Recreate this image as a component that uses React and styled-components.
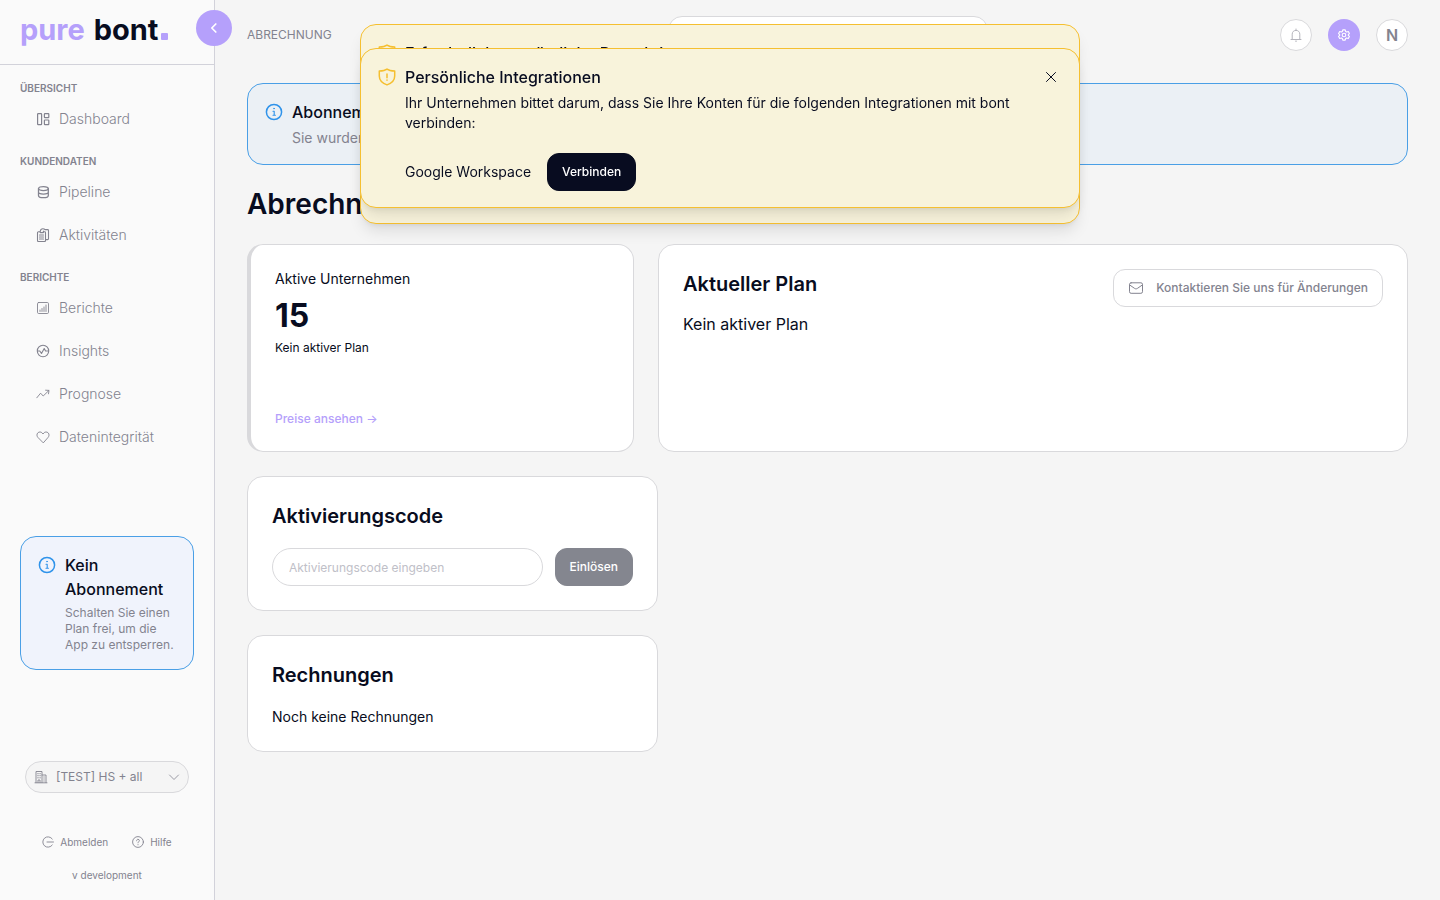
import React from "react";
import styled, { createGlobalStyle, css } from "styled-components";

const c = {
  ink: "#080c20",
  muted: "#83838f",
  line: "#d9d9dc",
  rule: "#d2d2da",
  page: "#f5f5f5",
  side: "#fafafa",
  violet: "#b5a0fb",
  blue: "#4a9fe6",
  info: "#2f93ea",
  amber: "#f5bf30",
  cream: "#f8f3db",
};

const Global = createGlobalStyle`
  *, *::before, *::after { box-sizing: border-box; }
  body {
    margin: 0;
    background: ${c.page};
    color: ${c.ink};
    font-family: Inter, "Liberation Sans", sans-serif;
    font-size: 14px;
    line-height: 20px;
  }
  h1, h2, h3, p, ul { margin: 0; padding: 0; }
  ul { list-style: none; }
  button, input, select { font-family: inherit; margin: 0; }
  button { cursor: pointer; }
  a { color: inherit; text-decoration: none; }
`;

const Page = styled.div`
  display: flex;
  min-height: 100vh;
`;

/* ---------- icons ---------- */

const Svg = styled.svg`
  flex: none;
  display: block;
  width: ${(p) => p.$size}px;
  height: ${(p) => p.$size}px;
  fill: none;
  stroke: currentColor;
  stroke-width: ${(p) => p.$stroke};
  stroke-linecap: round;
  stroke-linejoin: round;
`;

const Icon = ({ size = 14, stroke = 1, box = size, children }) => (
  <Svg $size={size} $stroke={stroke} viewBox={`0 0 ${box} ${box}`} aria-hidden="true">
    {children}
  </Svg>
);

const DashboardIcon = () => (
  <Icon stroke={1.2}>
    <rect x="1.6" y="1.6" width="4" height="11" rx=".6" />
    <rect x="8.4" y="1.6" width="4.4" height="4" rx=".6" />
    <rect x="8.4" y="8" width="4.4" height="4.6" rx=".6" />
  </Icon>
);
const DatabaseIcon = () => (
  <Icon stroke={1.3}>
    <ellipse cx="7.4" cy="3.6" rx="4.900" ry="2" />
    <path d="M2.500 3.600v6.800c0 1.300 2.200 2.200 4.900 2.200s4.900-.9 4.900-2.200V3.600M2.500 7c0 1.300 2.200 2.100 4.900 2.100s4.900-.8 4.900-2.100" />
  </Icon>
);
const ClipboardIcon = () => (
  <Icon stroke={1.1}>
    <path d="M4 3.800H2.400a.9.9 0 0 0-.9.9v7.900a.9.9 0 0 0 .9.9h6.200a.9.9 0 0 0 .9-.9V4.700a.9.9 0 0 0-.9-.9H7.400" />
    <path d="M4.200 3v1.600h3.200V3M4.400 3c.2-1.600 1.200-2.300 2.400-2.300S8.600 1 9 1.600h2.600a.9.9 0 0 1 .9.900v8.200a.9.9 0 0 1-.9.900H9.700M3.500 7h4M3.500 9h4M3.500 11h4" />
  </Icon>
);
const ReportIcon = () => (
  <Icon stroke={0.9}>
    <rect x="1.500" y="1.500" width="11" height="11" rx="1.200" />
    <path d="M4 10.500V9M6 10.500V7.500M8 10.500V6M10 10.500V4" />
  </Icon>
);
const InsightIcon = () => (
  <Icon stroke={1.100}>
    <circle cx="7" cy="7" r="5.700" />
    <path d="M1.500 7h2.300l1.700 2.500L8.200 4.600 9.600 7h2.900" />
  </Icon>
);
const TrendIcon = () => (
  <Icon stroke={0.9}>
    <path d="M.8 10.800 4.600 6.200l2.600 2.800 5.600-5.400M9.600 3.200l3.400.2-.5 3.400" />
  </Icon>
);
const HeartIcon = () => (
  <Icon stroke={0.9}>
    <path d="M7 12.600 1.900 7.400C.7 6.100.6 4.100 1.800 2.900c1.300-1.300 3.300-1.200 4.400.1L7 4l.8-1c1.100-1.300 3.100-1.400 4.400-.1 1.200 1.200 1.100 3.200-.1 4.500z" />
  </Icon>
);
const InfoIcon = () => (
  <Icon size={18} stroke={1.500}>
    <circle cx="9" cy="9" r="7.600" />
    <path d="M8 8.200h1.200v4M8 12.300h2.400" strokeWidth="1.100" />
    <circle cx="9" cy="5.600" r=".5" strokeWidth=".6" fill="currentColor" />
  </Icon>
);
const ShieldIcon = () => (
  <Icon size={18} stroke={1.500}>
    <path d="M9 1.100C7 2.600 4 3 1.300 3.100v5c0 4.300 3 7.200 7.700 8.800 4.700-1.600 7.700-4.500 7.700-8.800v-5C14 3 11 2.600 9 1.100z" />
    <path d="M9 6v3.800M9 12v.3" />
  </Icon>
);
const CloseIcon = () => (
  <Icon size={12}>
    <path d="M1.500 1.500l9 9M10.500 1.500l-9 9" />
  </Icon>
);
const BuildingIcon = () => (
  <Icon stroke={0.9}>
    <path d="M1 12.800h12M2 12.500v-11h6v11M8 5h4v7.500M4 12.500V10h2v2.500M3.700 3.700h.6M5.800 3.700h.6M3.700 5.700h.6M5.800 5.700h.6M3.700 7.800h.6M5.800 7.800h.6M9.800 7h.5M9.800 9h.5M9.800 11h.5" />
  </Icon>
);
const ChevronDown = () => (
  <Icon size={12} stroke={0.8}>
    <path d="M1.500 4 6 8.500 10.500 4" />
  </Icon>
);
const ChevronLeft = () => (
  <Icon size={12} stroke={1.700}>
    <path d="M7.800 2 3.800 6l4 4" />
  </Icon>
);
const LogoutIcon = () => (
  <Icon size={12} stroke={0.9}>
    <path d="M10.300 3A5.200 5.200 0 1 0 10.300 9M5 6h6.500" />
  </Icon>
);
const HelpIcon = () => (
  <Icon size={12} stroke={0.9}>
    <circle cx="6" cy="6" r="5.400" />
    <path d="M4.600 4.800c0-.9.6-1.500 1.400-1.500s1.400.6 1.400 1.300C7.400 5.500 6 5.700 6 6.800M6 8.600v.2" />
  </Icon>
);
const BellIcon = () => (
  <Icon>
    <path d="M2 11.500h10M3.200 11.500V6.200C3.200 3.900 4.800 2.400 7 2.400s3.800 1.500 3.800 3.800v5.300M7 2.400V1M6.200 13c.4.500 1.200.5 1.600 0" />
  </Icon>
);
const GearIcon = () => (
  <Icon size={12} stroke={1.100}>
    <path d="M4.800.9h2.400l.4 1.500 1.200.7 1.500-.5 1.100 2-1.100 1.100v.6l1.100 1.100-1.100 2-1.500-.5-1.200.7-.4 1.500H4.800l-.4-1.500-1.200-.7-1.500.5-1.100-2 1.100-1.100v-.6L.6 4.600l1.100-2 1.500.5 1.200-.7z" />
    <circle cx="6" cy="6" r="1.800" />
  </Icon>
);
const MailIcon = () => (
  <Icon size={16}>
    <rect x="1.500" y="2.800" width="13" height="10.500" rx="1.600" />
    <path d="M1.700 5 6.600 8.400c.9.600 1.900.6 2.800 0L14.300 5" />
  </Icon>
);

/* ---------- sidebar ---------- */

const Sidebar = styled.aside`
  position: relative;
  flex: 0 0 215px;
  display: flex;
  flex-direction: column;
  background: ${c.side};
  border-right: 1px solid ${c.rule};
`;

const Brand = styled.a`
  display: flex;
  align-items: center;
  gap: 9px;
  height: 65px;
  padding: 0 20px 5px;
  border-bottom: 1px solid ${c.rule};
  font-size: 29px;
  line-height: 40px;
  font-weight: 700;
`;
const BrandFirst = styled.span`
  color: ${c.violet};
`;
const BrandSecond = styled.span`
  display: flex;
  align-items: baseline;
  gap: 3px;
`;
const BrandDot = styled.span`
  width: 7px;
  height: 7px;
  border-radius: 1px;
  background: ${c.violet};
`;

const Collapse = styled.button`
  position: absolute;
  top: 10px;
  right: -18px;
  display: grid;
  place-items: center;
  width: 36px;
  height: 36px;
  padding: 0;
  border: 0;
  border-radius: 50%;
  background: ${c.violet};
  color: #fff;
`;

const Nav = styled.nav`
  display: flex;
  flex-direction: column;
  gap: 10px;
  padding: 13px 20px 0;
`;
const NavTitle = styled.h3`
  color: ${c.muted};
  font-size: 10px;
  line-height: 20px;
  font-weight: 600;
  text-transform: uppercase;
`;
const NavLink = styled.a`
  display: flex;
  align-items: center;
  gap: 9px;
  padding: 11px 0 12px 16px;
  color: ${c.muted};
  font-weight: 300;
`;

const noticeTone = {
  side: css`
    margin: auto 20px;
    background: #f0f3fc;
  `,
  page: css`
    background: #ebf0f5;
  `,
};
const Notice = styled.section`
  display: flex;
  gap: 9px;
  padding: 16px;
  padding-left: 17px;
  border: 1px solid ${c.blue};
  border-radius: 16px;
  color: ${c.info};
  ${(p) => noticeTone[p.$tone]}
`;
const NoticeIcon = styled.span`
  padding-top: 3px;
`;
const NoticeBody = styled.div`
  display: flex;
  flex-direction: column;
  gap: 4px;
  min-width: 0;
`;
const NoticeTitle = styled.h2`
  color: ${c.ink};
  font-size: 16px;
  line-height: 24px;
  font-weight: 500;
`;
const NoticeText = styled.p`
  color: ${c.muted};
  font-size: ${(p) => (p.$small ? 12 : 14)}px;
  line-height: ${(p) => (p.$small ? 16 : 20)}px;
`;

const Account = styled.label`
  display: flex;
  align-items: center;
  gap: 8px;
  height: 32px;
  margin: 14px 25px 0;
  padding: 0 8px;
  border: 1px solid ${c.line};
  border-radius: 16px;
  background: ${c.page};
  color: ${c.muted};
`;
const AccountSelect = styled.select`
  flex: 1;
  min-width: 0;
  padding: 0;
  border: 0;
  appearance: none;
  background: transparent;
  color: inherit;
  font-size: 12px;
  line-height: 16px;
`;

const SideFooter = styled.footer`
  display: flex;
  flex-direction: column;
  align-items: center;
  gap: 17px;
  padding: 41px 0 17px;
  color: ${c.muted};
  font-size: 10px;
  line-height: 16px;
`;
const FooterLinks = styled.div`
  display: flex;
  gap: 24px;
`;
const FooterLink = styled.a`
  display: flex;
  align-items: center;
  gap: 6px;
`;

/* ---------- main ---------- */

const Main = styled.main`
  flex: 1;
  min-width: 0;
  padding: 0 32px 32px;
`;
const TopBar = styled.header`
  display: grid;
  grid-template-columns: 1fr 320px 1fr;
  align-items: center;
  padding: 16px 0 29px;
`;
const Crumb = styled.span`
  color: ${c.muted};
  font-size: 12px;
  line-height: 16px;
  text-transform: uppercase;
`;
const Field = styled.input`
  flex: 1;
  min-width: 0;
  height: 38px;
  padding: 0 16px;
  border: 1px solid ${c.line};
  border-radius: ${(p) => (p.$search ? 14 : 19)}px;
  background: #fff;
  color: ${c.ink};
  font-size: 12px;
  line-height: 16px;
  &::placeholder {
    color: #c0c0c8;
    opacity: 1;
  }
`;
const TopActions = styled.div`
  display: flex;
  justify-content: flex-end;
  gap: 16px;
`;
const roundTone = {
  plain: css`
    border: 1px solid ${c.line};
    background: #fff;
    color: #b4b4bc;
  `,
  active: css`
    border: 0;
    background: ${c.violet};
    color: #fff;
  `,
  avatar: css`
    border: 1px solid ${c.line};
    background: #fff;
    color: ${c.muted};
  `,
};
const RoundButton = styled.button`
  display: grid;
  place-items: center;
  width: 32px;
  height: 32px;
  padding: 0;
  border-radius: 50%;
  font-size: 16px;
  font-weight: 600;
  ${(p) => roundTone[p.$tone]}
`;

const Content = styled.div`
  display: flex;
  flex-direction: column;
  gap: 24px;
`;
const PageTitle = styled.h1`
  font-size: 28px;
  line-height: 31px;
  font-weight: 600;
`;
const CardRow = styled.div`
  display: flex;
  gap: 24px;
`;
const Card = styled.section`
  display: flex;
  flex-direction: column;
  padding: 24px;
  border: 1px solid ${c.line};
  border-radius: 16px;
  background: #fff;
`;
const StatCard = styled(Card)`
  flex: 0 0 calc(100% / 3);
  min-height: 208px;
  border-left-width: 4px;
`;
const PlanCard = styled(Card)`
  flex: 1;
  gap: 5px;
`;
const StackCard = styled(Card)`
  width: calc(100% / 3 + 24px);
  gap: 17px;
`;
const CardTitle = styled.h2`
  font-size: 20px;
  line-height: 30px;
  font-weight: 600;
`;
const CardHead = styled.div`
  display: flex;
  justify-content: space-between;
  align-items: flex-start;
`;
const StatValue = styled.strong`
  margin: 7px 0 4px;
  font-size: 32px;
  line-height: 40px;
  font-weight: 700;
`;
const Caption = styled.p`
  font-size: 12px;
  line-height: 16px;
`;
const PlanText = styled.p`
  font-size: 16px;
  line-height: 24px;
`;
const PriceLink = styled.a`
  margin-top: auto;
  color: ${c.violet};
  font-size: 12px;
  line-height: 16px;
  font-weight: 500;
`;

const buttonTone = {
  dark: css`
    border-color: ${c.ink};
    background: ${c.ink};
    color: #fff;
  `,
  disabled: css`
    border-color: #84868f;
    background: #84868f;
    color: #fff;
  `,
  outline: css`
    border-color: ${c.line};
    background: #fff;
    color: ${c.muted};
  `,
};
const Button = styled.button`
  display: flex;
  align-items: center;
  gap: 12px;
  height: 38px;
  padding: 0 14px;
  border: 1px solid;
  border-radius: 12px;
  font-size: 12px;
  line-height: 16px;
  font-weight: 500;
  white-space: nowrap;
  ${(p) => buttonTone[p.$tone]}
`;
const CodeForm = styled.form`
  display: flex;
  gap: 12px;
`;

/* ---------- toasts ---------- */

const Toast = styled.section`
  position: fixed;
  top: ${(p) => p.$top}px;
  left: 50%;
  transform: translateX(-50%);
  display: flex;
  align-items: flex-start;
  gap: 9px;
  width: 720px;
  max-width: 100%;
  min-height: ${(p) => p.$minHeight}px;
  padding: 16px;
  padding-left: 17px;
  border: 1px solid ${c.amber};
  border-radius: 16px;
  background: ${c.cream};
  box-shadow: 0 10px 15px -3px rgba(0, 0, 0, 0.1), 0 4px 6px -4px rgba(0, 0, 0, 0.1);
`;
const ToastIcon = styled(NoticeIcon)`
  color: ${c.amber};
`;
const ToastBody = styled(NoticeBody)`
  flex: 1;
`;
const ToastText = styled.p`
  max-width: 620px;
`;
const ToastAction = styled.div`
  display: flex;
  align-items: center;
  gap: 16px;
  margin-top: 16px;
`;
const CloseButton = styled.button`
  display: grid;
  place-items: center;
  width: 24px;
  height: 24px;
  padding: 0;
  border: 0;
  background: transparent;
  color: ${c.ink};
`;

const groups = [
  { title: "Übersicht", items: [["Dashboard", DashboardIcon]] },
  { title: "Kundendaten", items: [["Pipeline", DatabaseIcon], ["Aktivitäten", ClipboardIcon]] },
  {
    title: "Berichte",
    items: [
      ["Berichte", ReportIcon],
      ["Insights", InsightIcon],
      ["Prognose", TrendIcon],
      ["Datenintegrität", HeartIcon],
    ],
  },
];

export default function App() {
  return (
    <>
      <Global />
      <Page>
        <Sidebar>
          <Brand href="#" aria-label="pure bont.">
            <BrandFirst>pure</BrandFirst>
            <BrandSecond>
              bont
              <BrandDot />
            </BrandSecond>
          </Brand>
          <Collapse type="button" aria-label="Menü einklappen">
            <ChevronLeft />
          </Collapse>
          <Nav>
            {groups.map((g) => (
              <div key={g.title}>
                <NavTitle>{g.title}</NavTitle>
                <ul>
                  {g.items.map(([label, Glyph]) => (
                    <li key={label}>
                      <NavLink href="#">
                        <Glyph />
                        {label}
                      </NavLink>
                    </li>
                  ))}
                </ul>
              </div>
            ))}
          </Nav>
          <Notice $tone="side">
            <NoticeIcon>
              <InfoIcon />
            </NoticeIcon>
            <NoticeBody>
              <NoticeTitle>Kein Abonnement</NoticeTitle>
              <NoticeText $small>Schalten Sie einen Plan frei, um die App zu entsperren.</NoticeText>
            </NoticeBody>
          </Notice>
          <Account>
            <BuildingIcon />
            <AccountSelect aria-label="Konto">
              <option>[TEST] HS + all</option>
            </AccountSelect>
            <ChevronDown />
          </Account>
          <SideFooter>
            <FooterLinks>
              <FooterLink href="#">
                <LogoutIcon />
                Abmelden
              </FooterLink>
              <FooterLink href="#">
                <HelpIcon />
                Hilfe
              </FooterLink>
            </FooterLinks>
            <span>v development</span>
          </SideFooter>
        </Sidebar>

        <Main>
          <TopBar>
            <Crumb>Abrechnung</Crumb>
            <Field $search type="search" aria-label="Suche" />
            <TopActions>
              <RoundButton $tone="plain" type="button" aria-label="Benachrichtigungen">
                <BellIcon />
              </RoundButton>
              <RoundButton $tone="active" type="button" aria-label="Einstellungen">
                <GearIcon />
              </RoundButton>
              <RoundButton $tone="avatar" type="button">
                N
              </RoundButton>
            </TopActions>
          </TopBar>
          <Content>
            <Notice $tone="page">
              <NoticeIcon>
                <InfoIcon />
              </NoticeIcon>
              <NoticeBody>
                <NoticeTitle>Abonnement</NoticeTitle>
                <NoticeText>Sie wurden</NoticeText>
              </NoticeBody>
            </Notice>
            <PageTitle>Abrechnung</PageTitle>
            <CardRow>
              <StatCard>
                <p>Aktive Unternehmen</p>
                <StatValue>15</StatValue>
                <Caption>Kein aktiver Plan</Caption>
                <PriceLink href="#">Preise ansehen →</PriceLink>
              </StatCard>
              <PlanCard>
                <CardHead>
                  <CardTitle>Aktueller Plan</CardTitle>
                  <Button $tone="outline" type="button">
                    <MailIcon />
                    Kontaktieren Sie uns für Änderungen
                  </Button>
                </CardHead>
                <PlanText>Kein aktiver Plan</PlanText>
              </PlanCard>
            </CardRow>
            <StackCard>
              <CardTitle>Aktivierungscode</CardTitle>
              <CodeForm>
                <Field type="text" placeholder="Aktivierungscode eingeben" aria-label="Aktivierungscode" />
                <Button $tone="disabled" type="button" disabled>
                  Einlösen
                </Button>
              </CodeForm>
            </StackCard>
            <StackCard>
              <CardTitle>Rechnungen</CardTitle>
              <p>Noch keine Rechnungen</p>
            </StackCard>
          </Content>
        </Main>
      </Page>

      <Toast $top={24} $minHeight={200}>
        <ToastIcon>
          <ShieldIcon />
        </ToastIcon>
        <ToastBody>
          <NoticeTitle>Erforderliche zusätzliche Berechtigungen</NoticeTitle>
        </ToastBody>
      </Toast>
      <Toast $top={48} $minHeight={160}>
        <ToastIcon>
          <ShieldIcon />
        </ToastIcon>
        <ToastBody>
          <NoticeTitle>Persönliche Integrationen</NoticeTitle>
          <ToastText>
            Ihr Unternehmen bittet darum, dass Sie Ihre Konten für die folgenden Integrationen mit bont verbinden:
          </ToastText>
          <ToastAction>
            <span>Google Workspace</span>
            <Button $tone="dark" type="button">
              Verbinden
            </Button>
          </ToastAction>
        </ToastBody>
        <CloseButton type="button" aria-label="Schließen">
          <CloseIcon />
        </CloseButton>
      </Toast>
    </>
  );
}
